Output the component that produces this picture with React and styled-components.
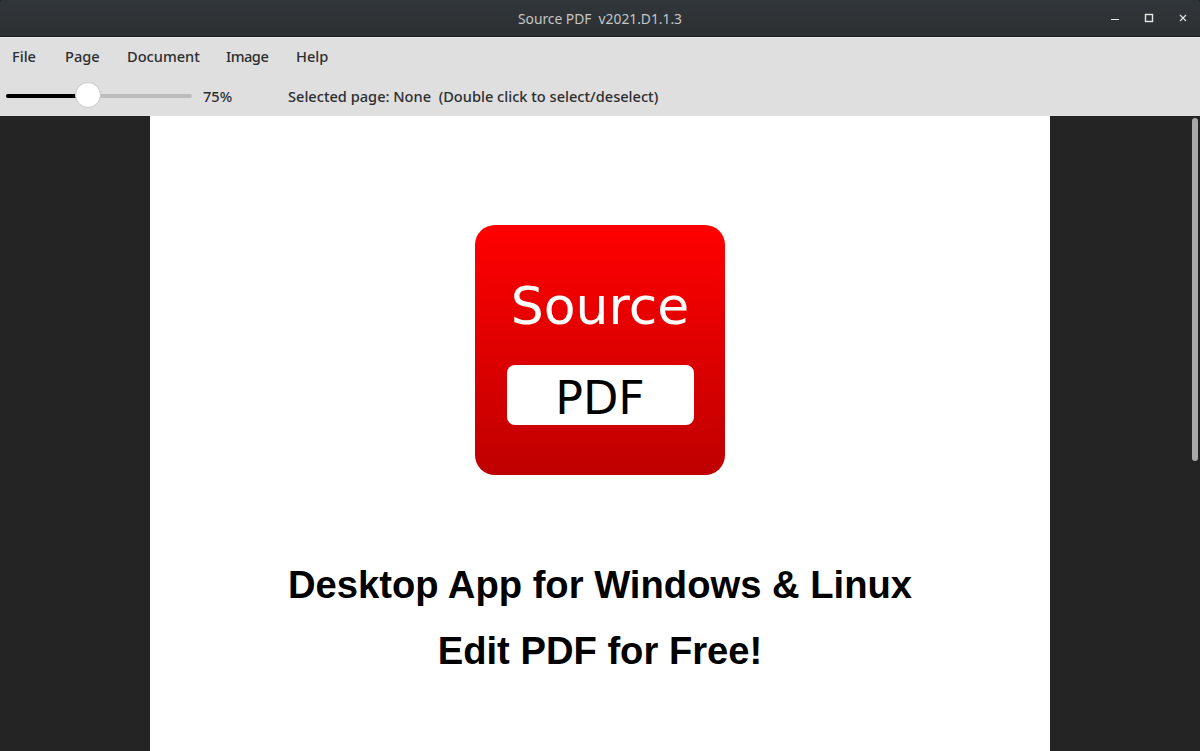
import React from 'react'
import styled, { createGlobalStyle } from 'styled-components'

const Global = createGlobalStyle`
  html, body { margin: 0; padding: 0; height: 100%; background: #242424; overflow: hidden; }
  #root { height: 100%; }
`

const Window = styled.div`
  display: flex;
  flex-direction: column;
  height: 751px;
  font-family: "Noto Sans", sans-serif;
`

const TitleBar = styled.header`
  flex: 0 0 36px;
  display: grid;
  grid-template-columns: 1fr auto 1fr;
  align-items: center;
  background: linear-gradient(#31363a, #2c3033);
  border-bottom: 1px solid #1b1d1f;
  border-radius: 4px 4px 0 0;
  color: #c4c6c7;
  font-size: 13.8px;
`

const Title = styled.span`
  grid-column: 2;
  white-space: pre;
`

const WindowButtons = styled.div`
  grid-column: 3;
  justify-self: end;
  display: flex;
  align-items: center;
  gap: 24px;
  padding-right: 12px;
`

const ToolArea = styled.div`
  flex: 0 0 79px;
  background: #dfdfdf;
  color: #2c2e30;
  font-size: 14.6px;
  font-weight: 500;
  border-top: 1px solid #e8e8e8;
  box-sizing: border-box;
`

const MenuBar = styled.nav`
  display: flex;
  height: 37px;
  align-items: center;
  padding: 0 0 2px 12px;
  box-sizing: border-box;
`

const MenuItem = styled.span`
  width: ${p => p.$w}px;
  letter-spacing: ${p => p.$spacing || 0}px;
`

const SliderRow = styled.div`
  display: flex;
  align-items: center;
  height: 41px;
  padding-left: 6px;
`

const Track = styled.div`
  position: relative;
  width: 186px;
  height: 4px;
  border-radius: 2px;
  background: #bdbdbd;
`

const TrackFill = styled.div`
  width: 70px;
  height: 100%;
  border-radius: 2px 0 0 2px;
  background: #000;
`

const Thumb = styled.div`
  position: absolute;
  left: 69px;
  top: -12px;
  width: 26px;
  height: 26px;
  box-sizing: border-box;
  border-radius: 50%;
  background: #fff;
  border: 1px solid #c8c8c8;
`

const Percent = styled.span`
  margin-left: 11px;
  width: 85px;
`

const Status = styled.span`
  white-space: pre;
`

const Viewer = styled.main`
  flex: 1;
  position: relative;
  display: flex;
  justify-content: center;
  background: #242424;
  overflow: hidden;
`

const Page = styled.article`
  width: 900px;
  padding-top: 109px;
  background: #fff;
  display: flex;
  flex-direction: column;
  align-items: center;
  box-sizing: border-box;
`

const Logo = styled.div`
  width: 250px;
  height: 250px;
  box-sizing: border-box;
  border-radius: 20px;
  background: linear-gradient(#ff0000, #bf0000);
  display: flex;
  flex-direction: column;
  align-items: center;
  padding-top: 48px;
  font-family: "DejaVu Sans", sans-serif;
`

const LogoWord = styled.div`
  color: #fff;
  font-size: 52px;
  line-height: 66px;
`

const LogoBadge = styled.div`
  margin-top: 26px;
  width: 187px;
  height: 60px;
  border-radius: 8px;
  background: #fff;
  color: #000;
  font-size: 46px;
  line-height: 66px;
  text-align: center;
`

const Headline = styled.h1`
  margin: ${p => p.$top}px 0 0;
  color: #000;
  font-family: "Liberation Sans", Arial, sans-serif;
  font-weight: 700;
  font-size: 38.2px;
  line-height: 42px;
  white-space: nowrap;
`

const ScrollThumb = styled.div`
  position: absolute;
  top: 2px;
  right: 2px;
  width: 6px;
  height: 343px;
  border-radius: 3px;
  background: #a8a8a8;
`

export default function App() {
  return (
    <Window>
      <Global />
      <TitleBar>
        <Title>Source PDF  v2021.D1.1.3</Title>
        <WindowButtons>
          <svg width="10" height="10" viewBox="0 0 10 10"><path d="M1 6.5h8" stroke="#e8e8e8" strokeWidth="1" /></svg>
          <svg width="10" height="10" viewBox="0 0 10 10"><rect x="1.5" y="1.5" width="7" height="7" fill="none" stroke="#e8e8e8" strokeWidth="1.4" /></svg>
          <svg width="10" height="10" viewBox="0 0 10 10"><path d="M2 2l6 6M8 2l-6 6" stroke="#e8e8e8" strokeWidth="1.1" /></svg>
        </WindowButtons>
      </TitleBar>
      <ToolArea>
        <MenuBar>
          <MenuItem $w={53}>File</MenuItem>
          <MenuItem $w={62}>Page</MenuItem>
          <MenuItem $w={99}>Document</MenuItem>
          <MenuItem $w={70} $spacing={-0.5}>Image</MenuItem>
          <MenuItem>Help</MenuItem>
        </MenuBar>
        <SliderRow>
          <Track>
            <TrackFill />
            <Thumb />
          </Track>
          <Percent>75%</Percent>
          <Status>Selected page: None  (Double click to select/deselect)</Status>
        </SliderRow>
      </ToolArea>
      <Viewer>
        <Page>
          <Logo>
            <LogoWord>Source</LogoWord>
            <LogoBadge>PDF</LogoBadge>
          </Logo>
          <Headline $top={89}>Desktop App for Windows &amp; Linux</Headline>
          <Headline $top={24}>Edit PDF for Free!</Headline>
        </Page>
        <ScrollThumb />
      </Viewer>
    </Window>
  )
}
